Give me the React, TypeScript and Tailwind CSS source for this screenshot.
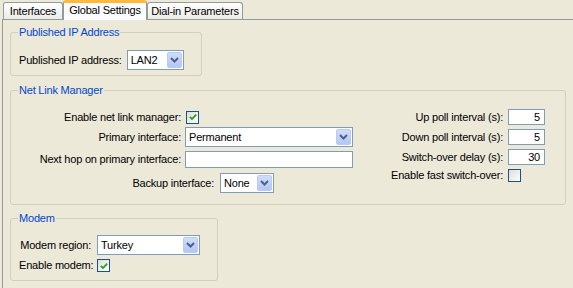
import type { ReactNode } from "react";

function Chevron() {
  return (
    <svg width="9" height="6" viewBox="0 0 9 6" aria-hidden>
      <path d="M1 1 L4.5 4.5 L8 1" stroke="#4d6185" strokeWidth="2" fill="none" />
    </svg>
  );
}

function Combo({ value, className }: { value: string; className: string }) {
  return (
    <div className={`flex h-[20px] items-center border border-[#7f9db9] bg-white pl-[3px] ${className}`}>
      <span className="flex-1">{value}</span>
      <span className="m-px flex h-[16px] w-[15px] items-center justify-center rounded-[2px] border border-[#b9cbf5] bg-gradient-to-b from-[#cfdcfd] to-[#b3c7f5]">
        <Chevron />
      </span>
    </div>
  );
}

function Checkbox({ checked }: { checked?: boolean }) {
  return (
    <span className="flex h-[13px] w-[13px] items-center justify-center border border-[#1c5180] bg-gradient-to-br from-[#dcdcd7] to-white">
      {checked && (
        <svg width="8" height="8" viewBox="0 0 8 8" aria-hidden>
          <path d="M0.8 3.8 L3 6 L7.2 1.6" stroke="#21a121" strokeWidth="1.8" fill="none" />
        </svg>
      )}
    </span>
  );
}

function TextBox({ value = "", className }: { value?: string; className: string }) {
  return (
    <div className={`border border-[#7f9db9] bg-white pr-[4px] text-right ${className}`}>{value}</div>
  );
}

function Group({ title, className, children }: { title: string; className: string; children: ReactNode }) {
  return (
    <fieldset className={`rounded-[3px] border border-[#d0d0bf] ${className}`}>
      <legend className="ml-[7px] px-px text-[#0046d5]">{title}</legend>
      {children}
    </fieldset>
  );
}

function Row({ label, className, children }: { label: string; className: string; children: ReactNode }) {
  return (
    <div className={`flex items-center gap-[4px] ${className}`}>
      <span className="w-[170px] whitespace-nowrap text-right">{label}</span>
      {children}
    </div>
  );
}

export default function App() {
  return (
    <div className="flex h-[288px] w-[573px] flex-col overflow-hidden whitespace-nowrap bg-[#ece9d8] font-['Liberation_Sans',Arial,sans-serif] text-[11px] leading-[13px] tracking-[-0.2px] text-black">
      <div className="flex h-[19px] items-end pl-[3px]">
        <div className="flex h-[17px] w-[60px] items-center justify-center rounded-t-[3px] border border-b-0 border-[#919b9c] bg-gradient-to-b from-white to-[#ecebe6]">
          Interfaces
        </div>
        <div className="relative z-10 -mb-px flex h-[20px] w-[84px] items-center justify-center rounded-t-[3px] border-x border-t-[3px] border-x-[#919b9c] border-t-[#ffb93c] bg-[#fcfcfe] pb-[3px]">
          Global Settings
        </div>
        <div className="flex h-[17px] w-[96px] items-center justify-center rounded-t-[3px] border border-b-0 border-[#919b9c] bg-gradient-to-b from-white to-[#ecebe6]">
          Dial-in Parameters
        </div>
      </div>

      <div className="ml-[2px] flex flex-1 flex-col border-l border-t border-[#919b9c] pl-[7px] pt-[6px]">
        <Group title="Published IP Address" className="w-[192px] pb-[5px] pt-[11px]">
          <div className="flex items-center gap-[5px] pl-[8px]">
            <span>Published IP address:</span>
            <Combo value="LAN2" className="w-[57px]" />
          </div>
        </Group>

        <Group title="Net Link Manager" className="mt-[8px] w-[556px] pb-[11px] pr-[20px] pt-[12px]">
          <div className="flex justify-between">
            <div className="flex flex-col">
              <Row label="Enable net link manager:" className="h-[16px]">
                <span className="ml-px">
                  <Checkbox checked />
                </span>
              </Row>
              <Row label="Primary interface:" className="mt-[2px]">
                <Combo value="Permanent" className="w-[168px]" />
              </Row>
              <Row label="Next hop on primary interface:" className="mt-[4px]">
                <TextBox className="h-[17px] w-[168px]" />
              </Row>
              <div className="mt-[5px] flex items-center gap-[6px]">
                <span className="w-[203px] text-right">Backup interface:</span>
                <Combo value="None" className="w-[54px]" />
              </div>
            </div>

            <div className="grid grid-cols-[auto_37px] grid-rows-[16px_16px_16px_13px] items-center gap-x-[5px] gap-y-[4px] self-start">
              <span className="text-right">Up poll interval (s):</span>
              <TextBox value="5" className="h-[16px] leading-[14px]" />
              <span className="text-right">Down poll interval (s):</span>
              <TextBox value="5" className="h-[16px] leading-[14px]" />
              <span className="text-right">Switch-over delay (s):</span>
              <TextBox value="30" className="h-[16px] leading-[14px]" />
              <span className="text-right">Enable fast switch-over:</span>
              <Checkbox />
            </div>
          </div>
        </Group>

        <Group title="Modem" className="mt-[7px] w-[208px] pb-[8px] pt-[10px]">
          <div className="grid grid-cols-[72px_auto] items-center gap-x-[6px] gap-y-[4px] pl-[8px]">
            <span className="text-right">Modem region:</span>
            <Combo value="Turkey" className="w-[103px]" />
            <span className="text-right">Enable modem:</span>
            <Checkbox checked />
          </div>
        </Group>
      </div>
    </div>
  );
}
